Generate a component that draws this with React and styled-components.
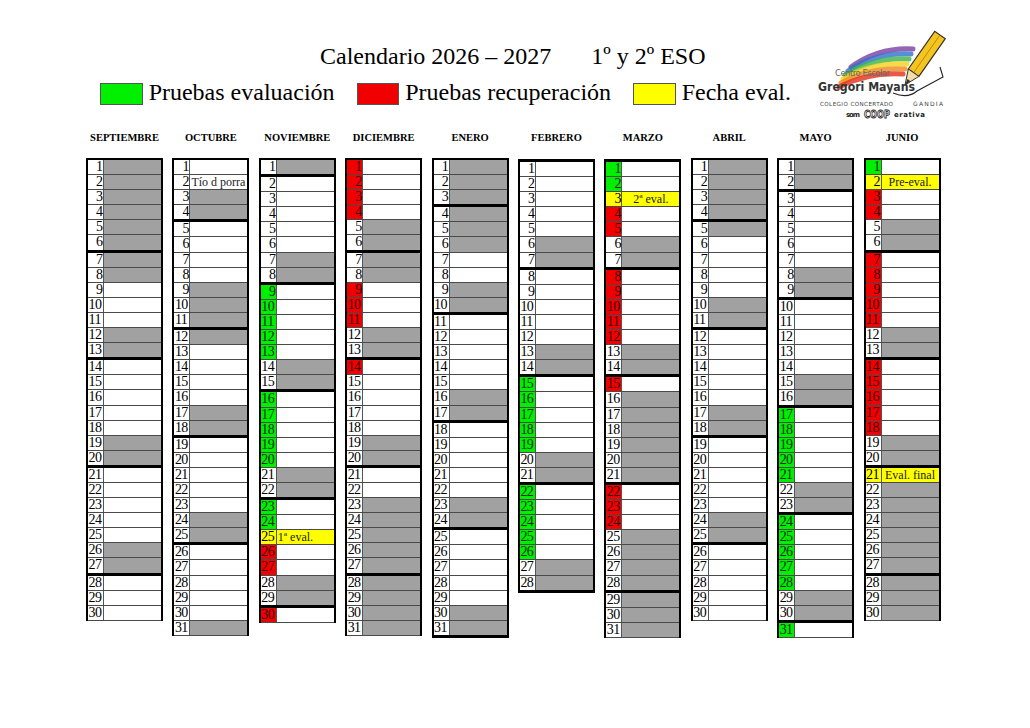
import React from 'react'
import styled, { createGlobalStyle } from 'styled-components'

const GlobalStyle = createGlobalStyle`
  * { box-sizing: border-box; }
  body {
    margin: 0;
    background: #fff;
    font-family: "Liberation Serif", "Times New Roman", serif;
    color: #000;
  }
`

const Page = styled.div`
  width: 1030px;
  height: 728px;
  overflow: hidden;
`

const Header = styled.header`
  display: flex;
  align-items: flex-start;
  height: 106px;
`

const HeaderMain = styled.div`
  width: 813px;
  padding-left: 100px;
  padding-top: 42px;
`

const Title = styled.h1`
  margin: 0 0 0 220px;
  font-weight: 400;
  font-size: 24px;
  line-height: 28px;
  white-space: nowrap;
`

const Course = styled.span`
  margin-left: 40px;
`

const Legend = styled.div`
  display: flex;
  align-items: center;
  margin-top: 8px;
  height: 28px;
`

const Swatch = styled.span`
  width: 43px;
  height: 22px;
  margin: 3px 6px 0 0;
  border: 1px solid #555;
  background: ${p => p.$color};
`

const LegendLabel = styled.span`
  font-size: 24px;
  line-height: 28px;
  margin-right: 22px;
  white-space: nowrap;
`

const Logo = styled.svg`
  margin-top: 27px;
  flex: none;
`

const Months = styled.div`
  display: grid;
  grid-template-columns: repeat(10, 77px);
  column-gap: 9.4px;
  margin: 25px 0 0 86px;
  align-items: start;
`

const Column = styled.section`
  display: flex;
  flex-direction: column;
`

const MonthName = styled.h2`
  margin: 0 0 13px;
  text-align: center;
  font-size: 10.5px;
  line-height: 14px;
  font-weight: 700;
  white-space: nowrap;
`

const Table = styled.div`
  border-left: 2px solid #000;
  border-right: 2.5px solid #000;
  border-top: ${p => (p.$mondayStart ? '3px' : '2px')} solid #000;
  margin-top: ${p => (p.$mondayStart ? '1px' : '0')};
`

const Row = styled.div`
  display: grid;
  grid-template-columns: 16px 1fr;
  height: ${p => (p.$thick ? '17.1px' : '15.1px')};
  border-bottom: ${p => (p.$thick ? '3px solid #000' : '1px solid #4a4a4a')};
`

const tones = {
  green: ['#00ee00', '#102a10'],
  red: ['#f00000', '#3a0000'],
  yellow: ['#ffff00', '#000']
}

const Num = styled.div`
  border-right: 1px solid #555;
  font-size: 14px;
  line-height: 14px;
  text-align: ${p => p.$align};
  padding: 0 0.5px;
  letter-spacing: -0.6px;
  background: ${p => (tones[p.$tone] ? tones[p.$tone][0] : '#fff')};
  color: ${p => (tones[p.$tone] ? tones[p.$tone][1] : '#000')};
  white-space: nowrap;
`

const Cell = styled.div`
  font-size: 12px;
  line-height: 14px;
  padding: 0 ${p => (p.$align === 'center' ? '0' : '1px')};
  white-space: nowrap;
  overflow: hidden;
  text-align: ${p => p.$align || 'left'};
  color: #222;
  background-color: ${p => (p.$yellow ? '#ffff00' : p.$gray ? '#ababab' : '#fff')};
  background-image: ${p =>
    p.$gray && !p.$yellow
      ? 'radial-gradient(circle, #959595 0.6px, transparent 0.8px)'
      : 'none'};
  background-size: 2px 2px;
`

const range = (a, b) => Array.from({ length: b - a + 1 }, (_, i) => a + i)

const MONTHS = [
  { name: 'SEPTIEMBRE', y: 2026, m: 8, days: 30, off: range(1, 8) },
  { name: 'OCTUBRE', y: 2026, m: 9, days: 31, off: [9, 12], notes: { 2: { text: 'Tío d porra' } } },
  {
    name: 'NOVIEMBRE', y: 2026, m: 10, days: 30,
    green: [...range(9, 13), ...range(16, 20), 23, 24],
    red: [26, 27, 30],
    yellow: { 25: { text: '1ª eval.' } }
  },
  { name: 'DICIEMBRE', y: 2026, m: 11, days: 31, off: [7, 8, ...range(23, 31)], red: [1, 2, 3, 4, 9, 10, 11, 14] },
  { name: 'ENERO', y: 2027, m: 0, days: 31, off: [1, 4, 5, 6] },
  { name: 'FEBRERO', y: 2027, m: 1, days: 28, green: [...range(15, 19), ...range(22, 26)] },
  {
    name: 'MARZO', y: 2027, m: 2, days: 31,
    off: [...range(16, 19), 25, 26, 29, 30, 31],
    green: [1, 2],
    red: [4, 5, ...range(8, 12), 15, 22, 23, 24],
    yellow: { 3: { text: '2ª eval.', align: 'center' } }
  },
  { name: 'ABRIL', y: 2027, m: 3, days: 30, off: [1, 2, 5] },
  { name: 'MAYO', y: 2027, m: 4, days: 31, green: [...range(17, 21), ...range(24, 28), 31] },
  {
    name: 'JUNIO', y: 2027, m: 5, days: 30,
    off: range(22, 30),
    green: [1],
    red: [3, 4, ...range(7, 11), ...range(14, 18)],
    yellow: {
      2: { text: 'Pre-eval.', align: 'center' },
      21: { text: 'Eval. final', align: 'center' }
    }
  }
]

function MonthTable({ month }) {
  const first = new Date(month.y, month.m, 1).getDay()
  const rows = range(1, month.days).map(day => {
    const wd = (first + day - 1) % 7
    const yellow = month.yellow && month.yellow[day]
    const note = yellow || (month.notes && month.notes[day])
    const tone = yellow
      ? 'yellow'
      : month.green && month.green.includes(day)
        ? 'green'
        : month.red && month.red.includes(day)
          ? 'red'
          : null
    const gray = wd === 0 || wd === 6 || (month.off && month.off.includes(day))
    return (
      <Row key={day} $thick={wd === 0}>
        <Num $tone={tone} $align={day < 10 ? 'right' : 'left'}>{day}</Num>
        <Cell $gray={gray} $yellow={!!yellow} $align={note && note.align}>
          {note ? note.text : ''}
        </Cell>
      </Row>
    )
  })
  return <Table $mondayStart={first === 1}>{rows}</Table>
}

function SchoolLogo() {
  const bands = [
    ['#7a3fa0', 'M38 40 Q66 20 100 22'],
    ['#2f6fd0', 'M35 44 Q63 25 98 27'],
    ['#3cb34a', 'M32 48 Q61 30 96 32'],
    ['#f2d21b', 'M30 52 Q59 35 94 37'],
    ['#f08a1c', 'M28 56 Q57 40 92 42'],
    ['#e0301e', 'M26 60 Q55 45 90 47']
  ]
  return (
    <Logo width="135" height="95" viewBox="0 0 135 95">
      {bands.map(([c, d]) => (
        <path key={c} d={d} stroke={c} strokeWidth="5" fill="none" strokeLinecap="round" opacity="0.8" />
      ))}
      <path d="M80 66 Q95 72 104 64 L130 50 L127 40" stroke="#222" strokeWidth="1.1" fill="none" />
      <polygon points="132.3,11.7 121.7,4.3 95.3,42 105.9,49.4" fill="#f4c51e" stroke="#333" strokeWidth="1.2" />
      <line x1="127" y1="8" x2="100.6" y2="45.7" stroke="#b88a10" strokeWidth="1" />
      <polygon points="95.3,42 105.9,49.4 92,58" fill="#f3dcaa" stroke="#333" strokeWidth="1" />
      <polygon points="94.5,52 97.5,54.2 92,58" fill="#333" />
      <text x="22" y="49" fontSize="8.5" fill="#666" fontFamily="DejaVu Sans, sans-serif" textLength="55">Centro Escolar</text>
      <text x="5" y="64" fontSize="13" fontWeight="700" fill="#333" fontFamily="DejaVu Sans, sans-serif" textLength="97" lengthAdjust="spacingAndGlyphs">Gregori Mayans</text>
      <text x="7" y="79" fontSize="5.6" fill="#444" fontFamily="DejaVu Sans, sans-serif" textLength="73">COLEGIO CONCERTADO</text>
      <text x="100" y="79" fontSize="6" fill="#444" fontFamily="DejaVu Sans, sans-serif" textLength="30">GANDIA</text>
      <text x="33" y="90" fontSize="7" fontWeight="700" fill="#222" fontFamily="DejaVu Sans, sans-serif" textLength="14">som</text>
      <text x="51" y="91" fontSize="11" fontWeight="700" fill="#fff" stroke="#222" strokeWidth="0.9" fontFamily="DejaVu Sans, sans-serif" textLength="26" lengthAdjust="spacingAndGlyphs">COOP</text>
      <text x="81" y="90" fontSize="7" fontWeight="700" fill="#222" fontFamily="DejaVu Sans, sans-serif" textLength="31">erativa</text>
    </Logo>
  )
}

export default function App() {
  return (
    <Page>
      <GlobalStyle />
      <Header>
        <HeaderMain>
          <Title>
            Calendario 2026 – 2027<Course>1º y 2º ESO</Course>
          </Title>
          <Legend>
            <Swatch $color="#00f000" />
            <LegendLabel>Pruebas evaluación</LegendLabel>
            <Swatch $color="#f00000" />
            <LegendLabel>Pruebas recuperación</LegendLabel>
            <Swatch $color="#ffff00" />
            <LegendLabel>Fecha eval.</LegendLabel>
          </Legend>
        </HeaderMain>
        <SchoolLogo />
      </Header>
      <Months>
        {MONTHS.map(m => (
          <Column key={m.name}>
            <MonthName>{m.name}</MonthName>
            <MonthTable month={m} />
          </Column>
        ))}
      </Months>
    </Page>
  )
}
